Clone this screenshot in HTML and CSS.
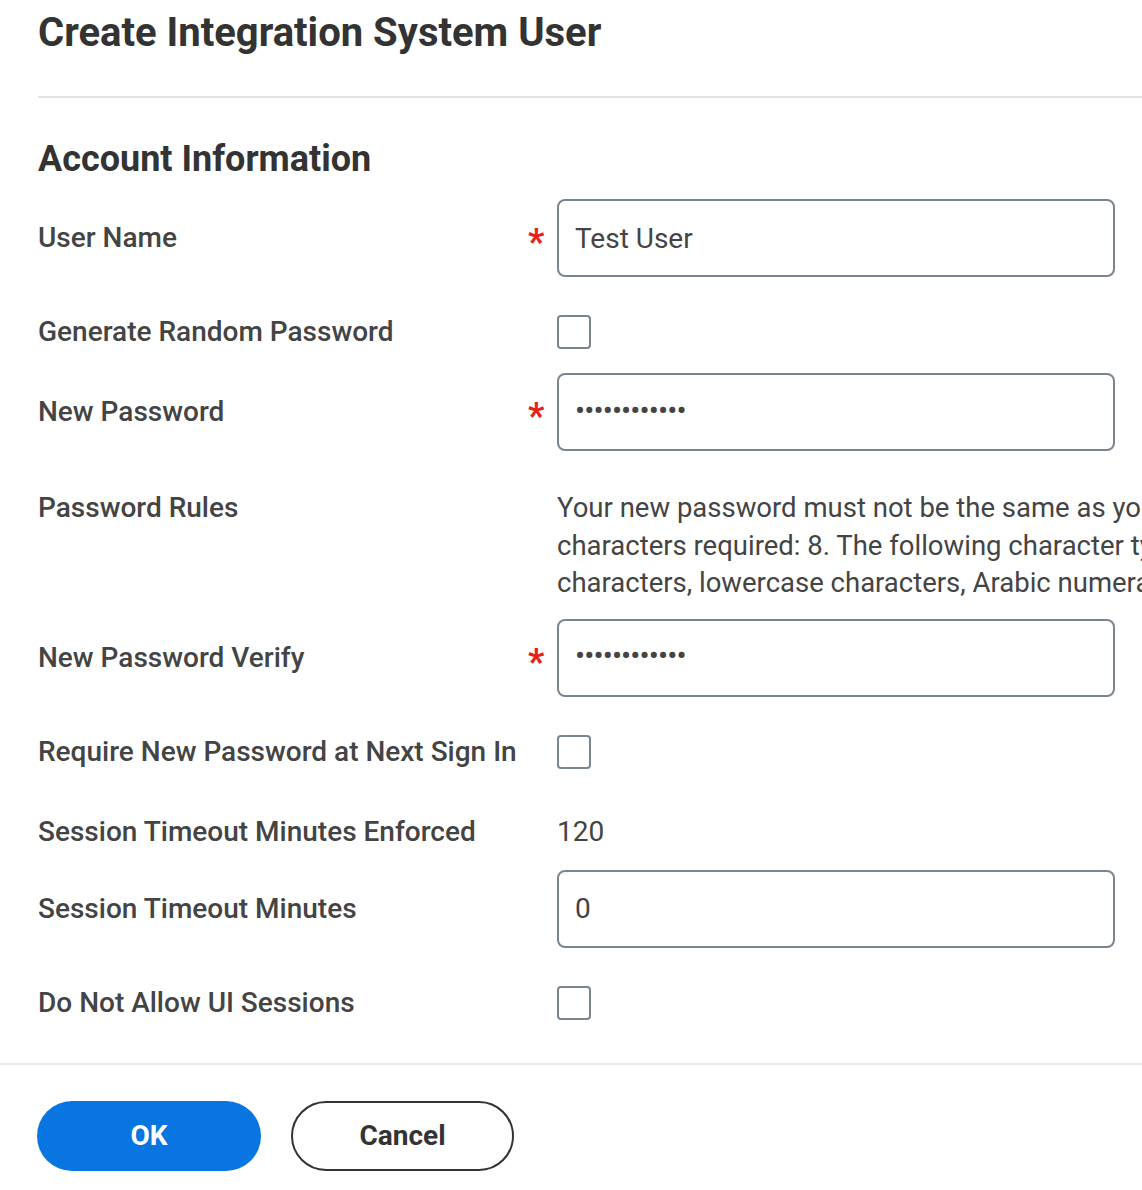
FILE: index.html
```html
<!DOCTYPE html>
<html lang="en">
<head>
<meta charset="utf-8">
<title>Create Integration System User</title>
<link rel="stylesheet" href="styles.css">
</head>
<body>
<div class="page">
  <header class="page-header">
    <h1 class="title">Create Integration System User</h1>
  </header>
  <section class="section">
    <h2 class="section-title">Account Information</h2>
    <form class="form">
      <div class="row row-first">
        <label class="label">User Name</label>
        <span class="req">*</span>
        <div class="value"><input class="text-input" type="text" value="Test User"></div>
      </div>
      <div class="row row-check">
        <label class="label">Generate Random Password</label>
        <span class="req"></span>
        <div class="value"><span class="checkbox"></span></div>
      </div>
      <div class="row row-after-check">
        <label class="label">New Password</label>
        <span class="req">*</span>
        <div class="value"><input class="text-input pw" type="password" value="abcdefghijkl"></div>
      </div>
      <div class="row row-rules">
        <label class="label label-rules">Password Rules</label>
        <span class="req"></span>
        <div class="value rules">
          <span class="rule-line">Your new password must not be the same as your current password. Minimum</span>
          <span class="rule-line">characters required: 8. The following character types are required: uppercase</span>
          <span class="rule-line">characters, lowercase characters, Arabic numerals.</span>
        </div>
      </div>
      <div class="row row-after-rules">
        <label class="label">New Password Verify</label>
        <span class="req">*</span>
        <div class="value"><input class="text-input pw" type="password" value="abcdefghijkl"></div>
      </div>
      <div class="row row-check">
        <label class="label">Require New Password at Next Sign In</label>
        <span class="req"></span>
        <div class="value"><span class="checkbox"></span></div>
      </div>
      <div class="row row-static">
        <label class="label">Session Timeout Minutes Enforced</label>
        <span class="req"></span>
        <div class="value static">120</div>
      </div>
      <div class="row row-after-static">
        <label class="label">Session Timeout Minutes</label>
        <span class="req"></span>
        <div class="value"><input class="text-input" type="text" value="0"></div>
      </div>
      <div class="row row-check">
        <label class="label">Do Not Allow UI Sessions</label>
        <span class="req"></span>
        <div class="value"><span class="checkbox"></span></div>
      </div>
    </form>
  </section>
  <footer class="footer">
    <button class="btn btn-primary" type="button">OK</button>
    <button class="btn btn-secondary" type="button">Cancel</button>
  </footer>
</div>
</body>
</html>
```

FILE: styles.css
```css
html, body {
  margin: 0;
  padding: 0;
  background: #ffffff;
  overflow: hidden;
}

body {
  font-family: Roboto, "Liberation Sans", Arial, sans-serif;
  color: #333333;
}

.page {
  width: 1142px;
  overflow: hidden;
}

.page-header {
  margin-left: 38px;
  padding-top: 9px;
  height: 87px;
  border-bottom: 2px solid #e3e6e9;
}

.title {
  margin: 0;
  font-size: 40px;
  line-height: 48px;
  font-weight: 700;
  color: #333333;
}

.section {
  padding-left: 38px;
}

.section-title {
  margin: 39px 0 0 0;
  font-size: 36px;
  line-height: 44px;
  font-weight: 700;
  color: #333333;
}

.form {
  display: flex;
  flex-direction: column;
}

.row {
  display: grid;
  grid-template-columns: 490px 29px 558px;
  align-items: center;
}

.row-first { margin-top: 18px; }
.row-check { margin-top: 38px; }
.row-after-check { margin-top: 24px; }
.row-rules { margin-top: 38px; align-items: start; }
.row-after-rules { margin-top: 17px; }
.row-static { margin-top: 44px; }
.row-after-static { margin-top: 19px; }

.label {
  font-size: 28px;
  line-height: 34px;
  font-weight: 500;
  color: #444444;
  white-space: nowrap;
}

.label-rules {
  line-height: 37.5px;
}

.req {
  color: #e4211b;
  font-size: 36px;
  font-weight: 700;
  line-height: 34px;
  height: 34px;
  padding-top: 4px;
  box-sizing: border-box;
}

.value {
  font-size: 28px;
  line-height: 37.5px;
  color: #444444;
}

.text-input {
  display: block;
  width: 558px;
  height: 78px;
  box-sizing: border-box;
  border: 2px solid #7b8590;
  border-radius: 8px;
  padding: 0 16px;
  font-family: Roboto, "Liberation Sans", Arial, sans-serif;
  font-size: 28px;
  color: #444444;
  background: #ffffff;
  outline: none;
}

.pw {
  font-size: 30px;
  letter-spacing: -0.9px;
  padding-bottom: 4px;
}

.checkbox {
  display: block;
  width: 34px;
  height: 34px;
  box-sizing: border-box;
  border: 2px solid #7b8590;
  border-radius: 4px;
  background: #ffffff;
}

.rules {
  display: flex;
  flex-direction: column;
  white-space: nowrap;
  font-size: 27.5px;
}

.rule-line {
  display: block;
}

.static {
  line-height: 38px;
}

.footer {
  margin-top: 43px;
  border-top: 2px solid #e8ecee;
  padding: 36px 0 0 37px;
  display: flex;
  gap: 30px;
}

.btn {
  height: 70px;
  border-radius: 35px;
  font-family: Roboto, "Liberation Sans", Arial, sans-serif;
  font-size: 28px;
  font-weight: 700;
  cursor: pointer;
}

.btn-primary {
  width: 224px;
  background: #0875e1;
  color: #ffffff;
  border: none;
}

.btn-secondary {
  width: 223px;
  background: #ffffff;
  color: #333333;
  border: 2px solid #333333;
}
```
